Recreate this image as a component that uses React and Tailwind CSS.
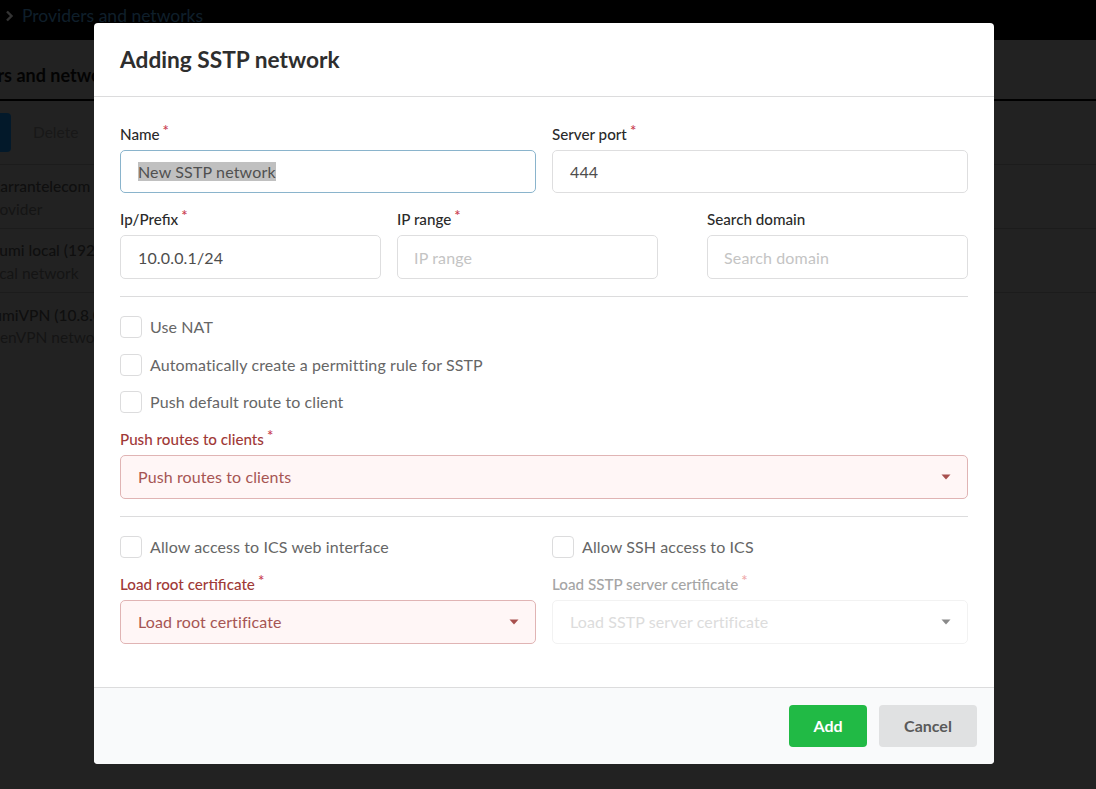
import React from "react";

const Star = ({ className = "text-[#c9404f]" }) => (
  <span className={`ml-[3px] text-[15px] leading-none relative -top-[4px] ${className}`}>*</span>
);

const Label = ({ children, color = "text-[#2a2a2a]", star, noStar }) => (
  <div className={`h-[22px] flex items-center text-[15.2px] ${color}`} style={{ fontWeight: 500 }}>
    <span>{children}</span>
    {noStar ? null : <Star className={star} />}
  </div>
);

const Input = ({ value, placeholder, focus, tall }) => (
  <div
    className={`${tall ? "h-[44px] pt-[1px]" : "h-[43px]"} flex items-center px-[17px] rounded-[5px] border text-[16px] tracking-[0.15px] ${
      focus ? "border-[#8ab4cc] text-[#505050]" : "border-[#dededf] text-[#4d4d4d]"
    }`}
  >
    {value ? (
      <span className={focus ? "bg-[#c0c0c0] leading-[19px]" : ""}>{value}</span>
    ) : (
      <span className="text-[#c4c4c4] -ml-[1px]">{placeholder}</span>
    )}
  </div>
);

const Check = ({ children, className = "" }) => (
  <div className={`flex items-center gap-[8px] h-[22px] ${className}`}>
    <span className="w-[22px] h-[22px] rounded-[4px] border border-[#dcdcdd] bg-white shrink-0" />
    <span className="text-[16px] tracking-[0.1px] text-[#666]">{children}</span>
  </div>
);

const Caret = ({ color }) => (
  <svg width="10" height="6" viewBox="0 0 10 6" className="shrink-0">
    <path d="M0.5 0.5h9L5 5.5z" fill={color} />
  </svg>
);

const Select = ({ text, error }) => (
  <div
    className={`h-[44px] flex items-center justify-between pl-[17px] pr-[16px] rounded-[5px] border text-[16px] tracking-[0.1px] ${
      error
        ? "bg-[#fff6f6] border-[#e0b4b4] text-[#a65553]"
        : "bg-white border-[#f2f2f2] text-[#dcdcdc]"
    }`}
  >
    <span>{text}</span>
    <Caret color={error ? "#a8504e" : "#8a8a8a"} />
  </div>
);

const ListRow = ({ title, sub, titleOffset, subOffset, last }) => (
  <div className={`h-[64px] pt-[3px] flex flex-col justify-center ${last ? "" : "border-b border-[#8c8c8c]"}`}>
    <div className={`w-[115px] overflow-hidden text-[15.5px] text-[#4a4a4a] whitespace-nowrap ${titleOffset}`} style={{ fontWeight: 500 }}>{title}</div>
    <div className={`w-[115px] overflow-hidden text-[15.5px] text-[#666] whitespace-nowrap -mt-[1px] ${subOffset}`}>{sub}</div>
  </div>
);

export default function App() {
  return (
    <div
      className="relative w-[1096px] h-[789px] overflow-hidden bg-[#aaaaaa]"
      style={{ fontFamily: "Lato, 'Open Sans', sans-serif" }}
    >
      <div className="h-10 bg-black flex items-center pl-[5px] pb-[8px] gap-[8px]">
        <svg width="9" height="12" viewBox="0 0 9 12">
          <path d="M2 1.5 6.5 6 2 10.5" fill="none" stroke="#fff" strokeWidth="2.4" />
        </svg>
        <span className="text-[17.5px] text-[#4a98d0]">Providers and networks</span>
      </div>

      <div className="h-[61px] border-b-2 border-black flex items-center pt-[11px] overflow-hidden">
        <span className="text-[18px] font-bold text-[#111] whitespace-nowrap -ml-[64px]">Providers and networks</span>
      </div>

      <div className="h-[64px] flex items-center border-b border-[#8c8c8c]">
        <span className="w-[11px] h-[39px] bg-[#0f7dd0] rounded-r-[4px]" />
        <span className="ml-[22px] pt-[1px] text-[15.5px] text-[#777]">Delete</span>
      </div>

      <ListRow title="Karrantelecom" sub="Provider" titleOffset="-ml-[10px]" subOffset="-ml-[15px]" />
      <ListRow title="Sumi local (192.168.0.1/24)" sub="Local network" titleOffset="-ml-[9px]" subOffset="-ml-[17px]" />
      <ListRow title="SumiVPN (10.8.0.1/24)" sub="OpenVPN network" titleOffset="-ml-[15px]" subOffset="-ml-[21px]" last />

      <div className="absolute inset-0 bg-black/80" />

      <div className="absolute left-[94px] top-[23px] w-[900px] h-[741px] bg-white rounded-[4px] flex flex-col overflow-hidden">
        <div className="h-[74px] shrink-0 border-b border-[#dcdcdd] flex items-center px-[26px] pt-[1px]">
          <h1 className="text-[22.7px] font-bold text-[#2e2e2e] leading-none">Adding SSTP network</h1>
        </div>

        <div className="flex-1 pt-[26px] pl-[26px] pr-[26px]">
          <div className="grid grid-cols-2 gap-x-[16px]">
            <div>
              <Label>Name</Label>
              <div className="mt-[5px]"><Input value="New SSTP network" focus /></div>
            </div>
            <div>
              <Label>Server port</Label>
              <div className="mt-[5px]"><Input value="444" /></div>
            </div>
          </div>

          <div className="mt-[15px] flex">
            <div className="w-[261px]">
              <Label>Ip/Prefix</Label>
              <div className="mt-[5px]"><Input value="10.0.0.1/24" tall /></div>
            </div>
            <div className="w-[261px] ml-[16px]">
              <Label>IP range</Label>
              <div className="mt-[5px]"><Input placeholder="IP range" tall /></div>
            </div>
            <div className="w-[261px] ml-[49px]">
              <Label noStar>Search domain</Label>
              <div className="mt-[5px]"><Input placeholder="Search domain" tall /></div>
            </div>
          </div>

          <div className="mt-[17px] border-t border-[#dcdcdd]" />

          <Check className="mt-[19px]">Use NAT</Check>
          <Check className="mt-[16px]">Automatically create a permitting rule for SSTP</Check>
          <Check className="mt-[15px]">Push default route to client</Check>

          <div className="mt-[15px]">
            <Label color="text-[#9f3a38]">Push routes to clients</Label>
            <div className="mt-[5px]"><Select text="Push routes to clients" error /></div>
          </div>

          <div className="mt-[17px] border-t border-[#dcdcdd]" />

          <div className="grid grid-cols-2 gap-x-[16px] mt-[19px]">
            <Check>Allow access to ICS web interface</Check>
            <Check>Allow SSH access to ICS</Check>
          </div>

          <div className="grid grid-cols-2 gap-x-[16px] mt-[15px]">
            <div>
              <Label color="text-[#9f3a38]">Load root certificate</Label>
              <div className="mt-[5px]"><Select text="Load root certificate" error /></div>
            </div>
            <div>
              <Label color="text-[#a5a5a5]" star="text-[#eeaaaa]">Load SSTP server certificate</Label>
              <div className="mt-[5px]"><Select text="Load SSTP server certificate" /></div>
            </div>
          </div>
        </div>

        <div className="h-[77px] shrink-0 border-t border-[#dcdcdd] bg-[#f9fafb] flex items-center justify-end pr-[17px] gap-[12px]">
          <button className="w-[78px] h-[42px] rounded-[4px] bg-[#21ba45] text-white text-[16px] font-bold">Add</button>
          <button className="w-[98px] h-[42px] rounded-[4px] bg-[#e0e1e2] text-[#5a5a5a] text-[16px] font-bold">Cancel</button>
        </div>
      </div>
    </div>
  );
}
